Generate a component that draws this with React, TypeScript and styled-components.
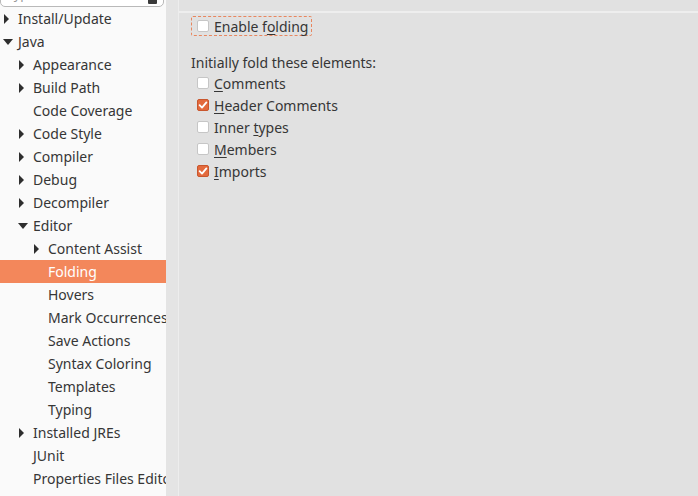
import React from "react";
import styled, { createGlobalStyle } from "styled-components";

const Global = createGlobalStyle`
  html, body { margin: 0; padding: 0; }
  body { width: 698px; height: 496px; overflow: hidden; background: #e1e1e1;
    font-family: "Noto Sans", "DejaVu Sans", sans-serif; font-size: 14px; color: #363636; }
`;

const Layout = styled.div`
  display: flex;
  width: 698px;
  height: 496px;
  overflow: hidden;
`;

const TreePane = styled.div`
  width: 166px;
  flex: none;
  background: #fafafa;
  display: flex;
  flex-direction: column;
  overflow: hidden;
`;

const Filter = styled.div`
  position: relative;
  height: 26px;
  margin: -19px 2px 0 0;
  border: 1px solid #b9b9b9;
  border-radius: 5px;
  background: #fff;
  box-sizing: border-box;
  padding: 2px 8px;
  color: #9a9a9a;
  font-size: 13px;
  line-height: 20px;
  white-space: nowrap;
  overflow: hidden;
`;

const ClearIcon = styled.span`
  position: absolute;
  right: 6px;
  top: 13px;
  width: 9px;
  height: 9px;
  background: #3a3a3a;
  border-radius: 1px;
`;

const Tree = styled.div`
  display: flex;
  flex-direction: column;
`;

const Row = styled.div<{ $level: number; $selected?: boolean }>`
  height: 23px;
  display: flex;
  align-items: center;
  padding-left: ${(p) => 3 + p.$level * 15}px;
  white-space: nowrap;
  background: ${(p) => (p.$selected ? "#f3875b" : "transparent")};
  color: ${(p) => (p.$selected ? "#ffffff" : "#363636")};
`;

const Twisty = styled.span`
  width: 15px;
  flex: none;
  display: flex;
  align-items: center;
  justify-content: flex-start;
`;

const Gutter = styled.div`
  width: 12px;
  flex: none;
  background: #e4e4e4;
  border-right: 1px solid #ededed;
`;

const Content = styled.div`
  flex: 1;
  display: flex;
  flex-direction: column;
  background: #e1e1e1;
`;

const TopRule = styled.div`
  height: 11px;
  border-bottom: 2px solid #eeeeee;
  box-sizing: content-box;
`;

const Body = styled.div`
  padding: 3px 0 0 12px;
  display: flex;
  flex-direction: column;
`;

const Focus = styled.div`
  align-self: flex-start;
  border: 1px dashed #e8865e;
  border-radius: 2px;
  padding: 0 3px 0 5px;
  height: 18px;
  display: flex;
  align-items: center;
  gap: 5px;
`;

const GroupLabel = styled.div`
  margin-top: 17px;
  height: 19px;
  line-height: 20px;
`;

const Options = styled.div`
  display: flex;
  flex-direction: column;
  padding-left: 6px;
`;

const Option = styled.div`
  height: 22px;
  display: flex;
  align-items: center;
  gap: 5px;
`;

const Box = styled.span<{ $checked?: boolean }>`
  width: 12px;
  height: 12px;
  flex: none;
  box-sizing: border-box;
  border-radius: 2px;
  border: 1px solid ${(p) => (p.$checked ? "#c9562d" : "#c6c6c6")};
  background: ${(p) => (p.$checked ? "#e36a3d" : "#ffffff")};
  display: flex;
  align-items: center;
  justify-content: center;
`;

const U = styled.span`
  text-decoration: underline;
  text-underline-offset: 2px;
`;

const Right = () => (
  <svg width="6" height="10" viewBox="0 0 6 10"><path d="M1 0 L6 5 L1 10 Z" fill="#2e2e2e" /></svg>
);
const Down = () => (
  <svg width="10" height="6" viewBox="0 0 10 6"><path d="M0 0 L10 0 L5 6 Z" fill="#2e2e2e" /></svg>
);
const Check = () => (
  <svg width="10" height="10" viewBox="0 0 10 10"><path d="M1.6 5.2 L4 7.6 L8.4 2.4" stroke="#fff" strokeWidth="1.8" fill="none" strokeLinecap="round" strokeLinejoin="round" /></svg>
);

type Item = { label: string; level: number; tw?: "r" | "d"; sel?: boolean };
const items: Item[] = [
  { label: "Install/Update", level: 0, tw: "r" },
  { label: "Java", level: 0, tw: "d" },
  { label: "Appearance", level: 1, tw: "r" },
  { label: "Build Path", level: 1, tw: "r" },
  { label: "Code Coverage", level: 1 },
  { label: "Code Style", level: 1, tw: "r" },
  { label: "Compiler", level: 1, tw: "r" },
  { label: "Debug", level: 1, tw: "r" },
  { label: "Decompiler", level: 1, tw: "r" },
  { label: "Editor", level: 1, tw: "d" },
  { label: "Content Assist", level: 2, tw: "r" },
  { label: "Folding", level: 2, sel: true },
  { label: "Hovers", level: 2 },
  { label: "Mark Occurrences", level: 2 },
  { label: "Save Actions", level: 2 },
  { label: "Syntax Coloring", level: 2 },
  { label: "Templates", level: 2 },
  { label: "Typing", level: 2 },
  { label: "Installed JREs", level: 1, tw: "r" },
  { label: "JUnit", level: 1 },
  { label: "Properties Files Editor", level: 1 },
];

const opts: { pre: string; u: string; post: string; checked: boolean }[] = [
  { pre: "", u: "C", post: "omments", checked: false },
  { pre: "", u: "H", post: "eader Comments", checked: true },
  { pre: "Inner ", u: "t", post: "ypes", checked: false },
  { pre: "", u: "M", post: "embers", checked: false },
  { pre: "", u: "I", post: "mports", checked: true },
];

export default function App() {
  return (
    <>
      <Global />
      <Layout>
        <TreePane>
          <Filter>
            type filter text
            <ClearIcon />
          </Filter>
          <Tree>
            {items.map((it) => (
              <Row key={it.label} $level={it.level} $selected={it.sel}>
                <Twisty>{it.tw === "r" ? <Right /> : it.tw === "d" ? <Down /> : null}</Twisty>
                {it.label}
              </Row>
            ))}
          </Tree>
        </TreePane>
        <Gutter />
        <Content>
          <TopRule />
          <Body>
            <Focus>
              <Box />
              <span>Enable f<U>o</U>lding</span>
            </Focus>
            <GroupLabel>Initially fold these elements:</GroupLabel>
            <Options>
              {opts.map((o) => (
                <Option key={o.post}>
                  <Box $checked={o.checked}>{o.checked && <Check />}</Box>
                  <span>{o.pre}<U>{o.u}</U>{o.post}</span>
                </Option>
              ))}
            </Options>
          </Body>
        </Content>
      </Layout>
    </>
  );
}
